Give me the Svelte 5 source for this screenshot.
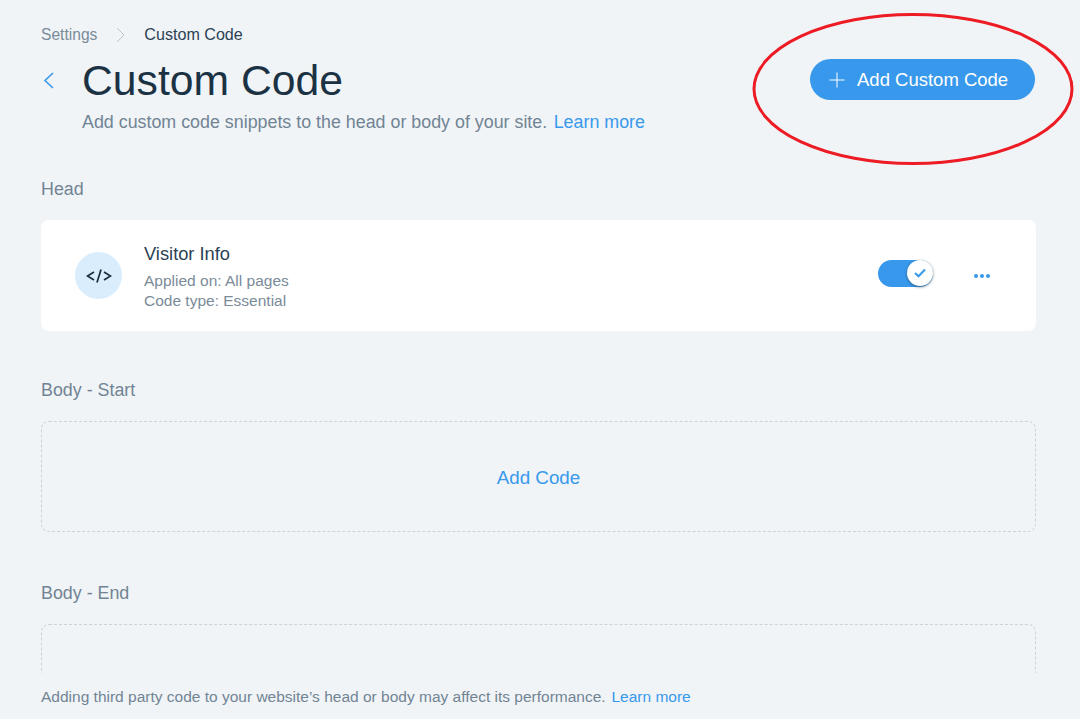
<script lang="ts">
	// Custom Code settings page
	const sections = [
		{ title: 'Body - Start', action: 'Add Code', gap: 'near' },
		{ title: 'Body - End', action: '', gap: 'far' }
	];
</script>

<div class="page">
	<main class="content">
		<nav class="crumbs">
			<span class="crumb-parent">Settings</span>
			<svg class="crumb-sep" width="9" height="16" viewBox="0 0 9 16" fill="none" stroke="#b9c6d2" stroke-width="1" aria-hidden="true">
				<polyline points="1 1 8 8 1 15"></polyline>
			</svg>
			<span class="crumb-current">Custom Code</span>
		</nav>

		<header class="header">
			<svg class="back" width="11" height="17" viewBox="0 0 11 17" fill="none" stroke="#3899ec" stroke-width="1.6" aria-hidden="true">
				<polyline points="10 1 2 8.5 10 16"></polyline>
			</svg>
			<div class="heading">
				<h1>Custom Code</h1>
				<p>Add custom code snippets to the head or body of your site. <a class="more" href="#learn">Learn more</a></p>
			</div>
			<button type="button" class="add-button">
				<svg width="16" height="16" viewBox="0 0 16 16" stroke="#fff" stroke-width="1" aria-hidden="true">
					<path d="M8 .5v15M.5 8h15"></path>
				</svg>
				<span>Add Custom Code</span>
			</button>
		</header>

		<h2 class="section-title first">Head</h2>
		<div class="card">
			<div class="code-icon">
				<svg width="26" height="14" viewBox="0 0 26 14" fill="none" stroke="#162d3d" stroke-width="1.7" aria-hidden="true">
					<polyline points="8 3 1.5 7 8 11"></polyline>
					<path d="M15 .5 11 13.5"></path>
					<polyline points="18 3 24.5 7 18 11"></polyline>
				</svg>
			</div>
			<div class="card-text">
				<div class="card-name">Visitor Info</div>
				<div class="card-meta">Applied on: All pages</div>
				<div class="card-meta">Code type: Essential</div>
			</div>
			<div class="toggle">
				<div class="knob">
					<svg width="12" height="10" viewBox="0 0 12 10" fill="none" stroke="#3899ec" stroke-width="2" aria-hidden="true">
						<polyline points="1 5 4.5 8.3 11 1.5"></polyline>
					</svg>
				</div>
			</div>
			<div class="dots" aria-label="More actions">
				<span></span><span></span><span></span>
			</div>
		</div>

		{#each sections as section}
			<h2 class="section-title {section.gap}">{section.title}</h2>
			<div class="dropzone">
				{#if section.action}
					<a class="add-code" href="#add">{section.action}</a>
				{/if}
			</div>
		{/each}
	</main>

	<footer class="footer">
		Adding third party code to your website’s head or body may affect its performance. <a class="more" href="#learn">Learn more</a>
	</footer>

	<svg class="annotation" width="324" height="155" viewBox="0 0 324 155" fill="none" aria-hidden="true">
		<ellipse cx="162" cy="77" rx="159" ry="74.5" stroke="#ed1c24" stroke-width="3"></ellipse>
	</svg>
</div>

<style>
	:global(body) {
		background: #f0f4f7;
	}

	.page {
		position: relative;
		display: flex;
		flex-direction: column;
		height: 719px;
		overflow: hidden;
		background: #f0f4f7;
		font-family: "Liberation Sans", Arial, sans-serif;
		color: #162d3d;
	}

	.content {
		flex: 1;
		min-height: 0;
		overflow: hidden;
		padding: 25px 44px 0 41px;
	}

	.crumbs {
		display: flex;
		align-items: center;
		height: 20px;
	}

	.crumb-parent {
		font-size: 15.6px;
		color: #7a8b99;
	}

	.crumb-sep {
		margin: 0 19px 0 19px;
	}

	.crumb-current {
		margin-bottom: 1px;
		font-size: 16.1px;
		color: #2b4254;
	}

	.header {
		display: flex;
		align-items: flex-start;
		margin-top: 11px;
	}

	.back {
		margin: 16px 28px 0 2px;
	}

	.heading h1 {
		margin: 0;
		font-size: 42.7px;
		line-height: 48px;
		font-weight: 400;
		color: #1b3244;
	}

	.heading p {
		margin: 6px 0 0;
		font-size: 17.85px;
		line-height: 24px;
		color: #728494;
	}

	a {
		color: #3899ec;
		text-decoration: none;
	}

	.more {
		margin-left: 1.5px;
	}

	.add-button {
		display: flex;
		align-items: center;
		gap: 12px;
		margin: 3px 1px 0 auto;
		width: 225px;
		height: 41px;
		padding: 0 0 0 19px;
		border: 0;
		border-radius: 21px;
		background: #3899ec;
		color: #fff;
		font-family: inherit;
		font-size: 18.5px;
		white-space: nowrap;
	}

	.section-title {
		margin: 47px 0 0;
		font-size: 17.85px;
		line-height: 24px;
		font-weight: 400;
		color: #728494;
	}

	.section-title.first {
		margin-top: 43px;
	}

	.section-title.far {
		margin-top: 49px;
	}

	.card {
		display: flex;
		align-items: center;
		height: 111px;
		margin-top: 19px;
		padding: 0 46px 0 34px;
		background: #fff;
		border-radius: 8px;
	}

	.code-icon {
		display: flex;
		align-items: center;
		justify-content: center;
		width: 47px;
		height: 47px;
		border-radius: 50%;
		background: #d9edfd;
	}

	.card-text {
		margin-left: 22px;
		padding-top: 3px;
	}

	.card-name {
		margin-bottom: 6px;
		font-size: 18.3px;
		line-height: 22px;
		color: #2b4254;
	}

	.card-meta {
		font-size: 15.5px;
		line-height: 20px;
		color: #7a8b99;
	}

	.toggle {
		display: flex;
		align-items: center;
		justify-content: flex-end;
		width: 55px;
		height: 27px;
		margin: 0 41px 5px auto;
		border-radius: 14px;
		background: #3899ec;
	}

	.knob {
		display: flex;
		align-items: center;
		justify-content: center;
		width: 26px;
		height: 26px;
		border-radius: 50%;
		background: #fff;
		box-shadow: 0 1px 3px rgba(22, 45, 61, 0.55);
	}

	.dots {
		display: flex;
		gap: 2px;
	}

	.dots span {
		width: 4px;
		height: 4px;
		border-radius: 50%;
		background: #3899ec;
	}

	.dropzone {
		display: flex;
		align-items: center;
		justify-content: center;
		height: 111px;
		margin-top: 19px;
		border: 1px dashed #c9d3db;
		border-radius: 8px;
		box-sizing: border-box;
		font-size: 18.8px;
	}

	.add-code {
		padding-top: 2px;
	}

	.footer {
		height: 46px;
		padding: 14px 0 0 41px;
		box-sizing: border-box;
		font-size: 15.5px;
		line-height: 20px;
		color: #728494;
	}

	.annotation {
		position: absolute;
		left: 751px;
		top: 12px;
	}
</style>
